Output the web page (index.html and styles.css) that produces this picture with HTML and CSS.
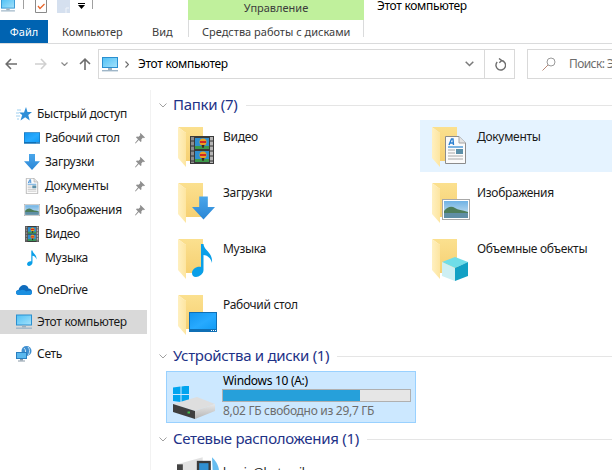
FILE: index.html
```html
<!DOCTYPE html>
<html lang="ru">
<head>
    <meta charset="UTF-8">
    <title>Этот компьютер</title>
    <link rel="stylesheet" href="styles.css">
</head>
<body>
    <!-- icon sprite -->
    <svg class="sprite" xmlns="http://www.w3.org/2000/svg">
        <defs>
            <linearGradient id="gBack" x1="0" y1="0" x2="0" y2="1"><stop offset="0" stop-color="#fbe08f"/><stop offset="1" stop-color="#f6d072"/></linearGradient>
            <linearGradient id="gFlap" x1="0" y1="0" x2="1" y2="0"><stop offset="0" stop-color="#fff0c0"/><stop offset="1" stop-color="#fde5a0"/></linearGradient>
            <linearGradient id="gBlue" x1="0" y1="0" x2="0" y2="1"><stop offset="0" stop-color="#4aa6ea"/><stop offset="1" stop-color="#2a86d6"/></linearGradient>
            <linearGradient id="gScreen" x1="0" y1="0" x2="1" y2="1"><stop offset="0" stop-color="#1496f0"/><stop offset="0.55" stop-color="#27aaff"/><stop offset="1" stop-color="#129cf5"/></linearGradient>
            <linearGradient id="gMon" x1="0" y1="0" x2="1" y2="1"><stop offset="0" stop-color="#4fc0f5"/><stop offset="1" stop-color="#a5e2fb"/></linearGradient>
            <linearGradient id="gSky" x1="0" y1="0" x2="0" y2="1"><stop offset="0" stop-color="#6fb2e4"/><stop offset="1" stop-color="#d5e8f2"/></linearGradient>
            <linearGradient id="gDrive" x1="0" y1="0" x2="0" y2="1"><stop offset="0" stop-color="#e8e8e8"/><stop offset="1" stop-color="#b5b5b5"/></linearGradient>
        </defs>
        <symbol id="folder" viewBox="0 0 42 48">
            <path d="M2 2H27V36H10V8Z" fill="url(#gBack)"/>
            <path d="M2 2L10 8V42L2 33Z" fill="url(#gFlap)"/>
        </symbol>
        <symbol id="film" viewBox="0 0 24 28">
            <rect width="24" height="28" fill="#3a3a3a"/>
            <rect x="1" y="1" width="3" height="26" fill="#8d8d8d"/>
            <rect x="20" y="1" width="3" height="26" fill="#b5b5b5"/>
            <path d="M1 5h3M1 10h3M1 15h3M1 20h3M1 25h3M20 5h3M20 10h3M20 15h3M20 20h3M20 25h3" stroke="#333" stroke-width="1"/>
            <rect x="5" y="2" width="14" height="11" fill="#2f8fd0"/>
            <rect x="5" y="15" width="14" height="11" fill="#2f8fd0"/>
            <rect x="5" y="10" width="14" height="3" fill="#3c9a4a"/>
            <rect x="5" y="23" width="14" height="3" fill="#3c9a4a"/>
            <circle cx="13" cy="6" r="3.5" fill="#e8a020"/>
            <path d="M10 5h6v2h-6z" fill="#d02828"/>
            <path d="M11.5 9h3l-1 3h-1z" fill="#402020"/>
            <circle cx="13" cy="19" r="3.5" fill="#e8a020"/>
            <path d="M10 18h6v2h-6z" fill="#d02828"/>
            <path d="M11.5 22h3l-1 3h-1z" fill="#402020"/>
        </symbol>
        <symbol id="down" viewBox="0 0 24 24">
            <path d="M7.5 0H16.5V11H24L12 24L0 11H7.5Z" fill="url(#gBlue)"/>
        </symbol>
        <symbol id="doc" viewBox="0 0 21 28">
            <path d="M.5.5H14L20.5 7V27.5H.5Z" fill="#fbfbfb" stroke="#8c8c8c"/>
            <path d="M14 .5V7H20.5" fill="#e4e4e4" stroke="#a5a5a5"/>
            <path d="M4 9L6.5 3H8L8.5 9M5 7H8" fill="none" stroke="#2a7fd0" stroke-width="1.4"/>
            <path d="M3 11H18" stroke="#2a86d0" stroke-width="1.2"/>
            <path d="M3 14H10M3 17H10M3 20H18M3 23H18" stroke="#a8a8a8"/>
            <rect x="11" y="13" width="7" height="5" fill="#5b8fa8"/>
        </symbol>
        <symbol id="photo" viewBox="0 0 28 21">
            <rect x=".5" y=".5" width="27" height="20" fill="#fff" stroke="#a8a8a8"/>
            <rect x="2" y="2" width="24" height="17" fill="url(#gSky)"/>
            <path d="M2 12C6 7 10 7 13 9S20 11 26 13V15H2Z" fill="#4d7d5a"/>
            <rect x="2" y="14" width="24" height="5" fill="#5f8ea5"/>
        </symbol>
        <symbol id="note" viewBox="0 0 21 34">
            <path d="M9 1H11.5C12 8 21 9 20 20C19 15 15 12 11.5 12V27C11.5 31 7 34 4 34C1 34 0 32 0 30C0 26 5 23 9 24Z" fill="#0a9fe8"/>
        </symbol>
        <symbol id="screen" viewBox="0 0 28 20">
            <rect width="28" height="20" fill="#0f6fb5"/>
            <rect x="1" y="1" width="26" height="16" fill="url(#gScreen)"/>
            <path d="M22 18.5h1M24 18.5h1M26 18.5h1" stroke="#fff"/>
        </symbol>
        <symbol id="cube" viewBox="0 0 26 24">
            <path d="M13 0L26 5L13 11L0 5Z" fill="#6fdde8"/>
            <path d="M0 5L13 11V24L0 19Z" fill="#cdeff3"/>
            <path d="M26 5L13 11V24L26 19Z" fill="#12a0c4"/>
        </symbol>
        <symbol id="pc" viewBox="0 0 16 15">
            <rect x=".5" y=".5" width="15" height="10" fill="url(#gMon)" stroke="#2a8fd0"/>
            <rect x="6" y="11" width="4" height="2" fill="#9fb0bd"/>
            <rect y="13" width="16" height="1.4" fill="#9fb6c8"/>
        </symbol>
        <symbol id="star" viewBox="0 0 16 16">
            <path d="M10 1L11.5 6H16L12.3 9L13.7 14.5L9.2 11.3L4.5 14.5L6.2 9L3 6.5H8Z" fill="#2f8fd8"/>
            <path d="M1 4H5M0 7H3M0 10H4M1 13H3" stroke="#9fd0f0"/>
        </symbol>
        <symbol id="cloud" viewBox="0 0 16 10">
            <path d="M3 10C1 10 0 9 0 7.5C0 6 1 5 2.5 5C3 2 5.5 0 8 0C10.5 0 12 1.5 12.5 3.5C14.5 3.5 16 5 16 7C16 9 15 10 13 10Z" fill="#0f6cbd"/>
            <path d="M3 10C1 10 0 9 0 7.5C0 6 2 5 4 5.5C7 4 9 5.5 10 6.5C12 5.5 16 5.5 16 7C16 9 15 10 13 10Z" fill="#1b8fe0"/>
        </symbol>
        <symbol id="net" viewBox="0 0 16 16">
            <circle cx="10.5" cy="5" r="5" fill="#3f8fd0"/>
            <path d="M8 2C10 4 10 6 8.5 8M12 1C14 3 14 6 12.5 9" stroke="#c8e4f6" fill="none"/>
            <rect x=".5" y="6.5" width="10" height="6" fill="#5ab8ee" stroke="#2a7fc0"/>
            <rect x="4" y="13" width="3" height="1.5" fill="#8a9aa8"/>
            <rect x="2" y="14.5" width="7" height="1" fill="#8a9aa8"/>
        </symbol>
        <symbol id="pin" viewBox="0 0 10 11">
            <path d="M5.5 0L10 4.5L8.8 5.2L8 4.6L6.3 6.4L6.5 8.2L5.6 9L3.8 7L.6 10.6L0 10L3 6.2L1 4.4L1.8 3.6L3.6 3.7L5.4 2L4.8 1.1Z" fill="#8f8f8f"/>
        </symbol>
        <symbol id="drive" viewBox="0 0 42 33">
            <path d="M0 1.500L7.500 .5V8H0ZM8.500 .4L16 -.5V8H8.500ZM0 9H7.500V16L0 15ZM8.500 9H16V17L8.500 16.100Z" fill="#00a4ef"/>
            <path d="M0 18L24 11L42 18L22 25Z" fill="#dedede"/>
            <path d="M0 18L22 25V33L0 26Z" fill="#3f3f3f"/>
            <path d="M22 25L42 18V25L22 33Z" fill="url(#gDrive)"/>
            <rect x="14.500" y="25.500" width="2.500" height="2" fill="#3fc04a"/>
        </symbol>
        <symbol id="media" viewBox="0 0 36 20">
            <path d="M0 6L22 0V20H0Z" fill="#e2e2e2"/>
            <path d="M0 6H5V20H0Z" fill="#444"/>
            <rect x="17" y="3" width="12" height="14" fill="#3a3a3a"/>
            <rect x="19" y="5" width="8" height="9" fill="#2f8fd0"/>
            <path d="M30 0C33 3 36 7 36 12V20H31Z" fill="#66bdf0"/>
        </symbol>
    </svg>

    <div class="topbar">
        <div class="qat">
            <svg class="qat-pc"><use href="#pc"/></svg>
            <span class="qat-sep"></span>
            <svg class="qat-check" viewBox="0 0 12 13"><path d="M.5 0V12.500H11.500V0" fill="#fff" stroke="#8a8a8a"/><path d="M3 6L5 8.500L9.500 4" fill="none" stroke="#e8652a" stroke-width="1.300"/></svg>
            <svg class="qat-page" viewBox="0 0 13 13"><path d="M0 0H13V13H0Z" fill="#d5e0ef"/><path d="M12 8H9V13" fill="none" stroke="#f0f4fa"/></svg>
            <svg class="qat-drop" viewBox="0 0 7 6"><path d="M0 .5H7" stroke="#000"/><path d="M0 2H7L3.500 6Z" fill="#000"/></svg>
            <span class="qat-sep"></span>
        </div>
        <div class="context-tab">Управление</div>
        <div class="window-title">Этот компьютер</div>
    </div>

    <div class="tabs">
        <div class="tab tab-file">Файл</div>
        <div class="tab tab-comp">Компьютер</div>
        <div class="tab tab-view">Вид</div>
        <div class="tab tab-disk">Средства работы с дисками</div>
    </div>

    <div class="addressbar">
        <div class="nav-buttons">
            <svg class="arrow" viewBox="0 0 12 12"><path d="M6 1L1.200 6L6 11M1.500 6H12" fill="none" stroke="#6d6d6d" stroke-width="1.600"/></svg>
            <svg class="arrow arrow-off" viewBox="0 0 12 12"><path d="M6 1L10.800 6L6 11M10.500 6H0" fill="none" stroke="#d0d0d0" stroke-width="1.600"/></svg>
            <svg class="chev" viewBox="0 0 7 4"><path d="M.5 .5L3.500 3.500L6.500 .5" fill="none" stroke="#8a8a8a" stroke-width="1.200"/></svg>
            <svg class="arrow arrow-up" viewBox="0 0 12 12"><path d="M1 6L6 1.200L11 6M6 1.500V12" fill="none" stroke="#6d6d6d" stroke-width="1.600"/></svg>
        </div>
        <div class="address">
            <svg class="addr-pc"><use href="#pc"/></svg>
            <svg class="addr-sep" viewBox="0 0 4 7"><path d="M.5 .5L3.500 3.500L.5 6.500" fill="none" stroke="#6d6d6d" stroke-width="1.200"/></svg>
            <span class="addr-text">Этот компьютер</span>
            <svg class="addr-drop" viewBox="0 0 9 6"><path d="M.7 .7L4.500 4.500L8.300 .7" fill="none" stroke="#7a7a7a" stroke-width="1.500"/></svg>
            <div class="addr-refresh">
                <svg viewBox="0 0 12 13"><path d="M7.500 2.500A4.800 4.800 0 1 1 3.200 4M5 .5L7.800 2.600L5.300 4.800" fill="none" stroke="#6d6d6d" stroke-width="1.400"/></svg>
            </div>
        </div>
        <div class="search">
            <svg viewBox="0 0 14 14"><circle cx="9" cy="5" r="4" fill="none" stroke="#9a9a9a"/><path d="M6 8L.5 13.500" stroke="#b98a78"/></svg>
            <span>Поиск: Этот компьютер</span>
        </div>
    </div>

    <div class="content">
        <nav class="sidebar">
            <div class="nav-group">
                <div class="nav-item top"><svg class="ico"><use href="#star"/></svg>Быстрый доступ</div>
                <div class="nav-item sub"><svg class="ico"><use href="#screen"/></svg><span class="nav-label">Рабочий стол</span><svg class="pin"><use href="#pin"/></svg></div>
                <div class="nav-item sub"><svg class="ico"><use href="#down"/></svg><span class="nav-label">Загрузки</span><svg class="pin"><use href="#pin"/></svg></div>
                <div class="nav-item sub"><svg class="ico"><use href="#doc"/></svg><span class="nav-label">Документы</span><svg class="pin"><use href="#pin"/></svg></div>
                <div class="nav-item sub"><svg class="ico"><use href="#photo"/></svg><span class="nav-label">Изображения</span><svg class="pin"><use href="#pin"/></svg></div>
                <div class="nav-item sub"><svg class="ico"><use href="#film"/></svg><span class="nav-label">Видео</span></div>
                <div class="nav-item sub"><svg class="ico"><use href="#note"/></svg><span class="nav-label">Музыка</span></div>
            </div>
            <div class="nav-group">
                <div class="nav-item top"><svg class="ico"><use href="#cloud"/></svg>OneDrive</div>
            </div>
            <div class="nav-group">
                <div class="nav-item top selected"><svg class="ico"><use href="#pc"/></svg>Этот компьютер</div>
            </div>
            <div class="nav-group">
                <div class="nav-item top"><svg class="ico"><use href="#net"/></svg>Сеть</div>
            </div>
        </nav>

        <main class="main">
            <div class="group-head">
                <svg class="group-chev" viewBox="0 0 8 5"><path d="M.5 .5L4 4L7.500 .5" fill="none" stroke="#a0a0a0"/></svg>
                <span>Папки (7)</span><i class="group-line"></i>
            </div>
            <div class="folders">
                <div class="tile">
                    <svg class="tile-ico" viewBox="0 0 42 48"><use href="#folder"/><use href="#film" x="14" y="11" width="24" height="28"/></svg>
                    <span class="tile-name">Видео</span>
                </div>
                <div class="tile hovered">
                    <svg class="tile-ico" viewBox="0 0 42 48"><use href="#folder"/><use href="#doc" x="15" y="11" width="21" height="28"/></svg>
                    <span class="tile-name">Документы</span>
                </div>
                <div class="tile">
                    <svg class="tile-ico" viewBox="0 0 42 48"><use href="#folder"/><use href="#down" x="16" y="15" width="23" height="24"/></svg>
                    <span class="tile-name">Загрузки</span>
                </div>
                <div class="tile">
                    <svg class="tile-ico" viewBox="0 0 42 48"><use href="#folder"/><use href="#photo" x="12" y="18" width="28" height="21"/></svg>
                    <span class="tile-name">Изображения</span>
                </div>
                <div class="tile">
                    <svg class="tile-ico" viewBox="0 0 42 48"><use href="#folder"/><use href="#note" x="16" y="6" width="21" height="34"/></svg>
                    <span class="tile-name">Музыка</span>
                </div>
                <div class="tile">
                    <svg class="tile-ico" viewBox="0 0 42 48"><use href="#folder"/><use href="#cube" x="12" y="20" width="26" height="24"/></svg>
                    <span class="tile-name">Объемные объекты</span>
                </div>
                <div class="tile">
                    <svg class="tile-ico" viewBox="0 0 42 48"><use href="#folder"/><use href="#screen" x="13" y="19" width="28" height="20"/></svg>
                    <span class="tile-name">Рабочий стол</span>
                </div>
            </div>

            <div class="group-head">
                <svg class="group-chev" viewBox="0 0 8 5"><path d="M.5 .5L4 4L7.500 .5" fill="none" stroke="#a0a0a0"/></svg>
                <span>Устройства и диски (1)</span><i class="group-line"></i>
            </div>
            <div class="disk">
                <svg class="disk-ico"><use href="#drive"/></svg>
                <div class="disk-info">
                    <div class="disk-name">Windows 10 (A:)</div>
                    <div class="disk-bar"><div class="disk-used" style="width: 73%"></div></div>
                    <div class="disk-free">8,02 ГБ свободно из 29,7 ГБ</div>
                </div>
            </div>

            <div class="group-head">
                <svg class="group-chev" viewBox="0 0 8 5"><path d="M.5 .5L4 4L7.500 .5" fill="none" stroke="#a0a0a0"/></svg>
                <span>Сетевые расположения (1)</span><i class="group-line"></i>
            </div>
            <div class="tile media-tile">
                <svg class="media-ico"><use href="#media"/></svg>
                <span class="tile-name">lumia@hotmail</span>
            </div>
        </main>
    </div>
</body>
</html>
```

FILE: styles.css
```css
* {
    box-sizing: border-box;
}

html, body {
    margin: 0;
    padding: 0;
    width: 612px;
    height: 470px;
    overflow: hidden;
}

body {
    background: #fff;
    font-family: "Noto Sans", sans-serif;
    font-size: 12px;
    line-height: 16px;
    letter-spacing: -0.3px;
    color: #000;
}

svg {
    display: block;
    flex: none;
}

.sprite {
    width: 0;
    height: 0;
}

/* title row */
.topbar {
    display: flex;
    height: 20px;
}

.qat {
    display: flex;
    width: 188px;
}

.qat-pc {
    width: 16px;
    height: 13px;
    margin-top: -1px;
}

.qat-sep {
    width: 1px;
    height: 9px;
    margin-left: 7px;
    background: #a0a0a0;
}

.qat-check {
    width: 12px;
    height: 13px;
    margin-left: 11px;
}

.qat-page {
    width: 13px;
    height: 13px;
    margin-left: 10px;
}

.qat-drop {
    width: 7px;
    height: 6px;
    margin: 3px 0 0 8px;
}

.context-tab {
    width: 176px;
    background: #c0f09c;
    text-align: center;
    color: #3c3c3c;
    font-size: 11px;
    letter-spacing: 0;
}

.window-title {
    margin-left: 13px;
    line-height: 11px;
}

/* ribbon tabs */
.tabs {
    display: flex;
    height: 24px;
    border-bottom: 1px solid #dadbdc;
    color: #3c3c3c;
    font-size: 11px;
    letter-spacing: 0;
}

.tab {
    padding-top: 4px;
    white-space: nowrap;
}

.tab-file {
    width: 48px;
    background: #0063b1;
    color: #fff;
    text-align: center;
}

.tab-comp {
    width: 90px;
    padding-left: 14px;
}

.tab-view {
    width: 50px;
    padding-left: 14px;
}

.tab-disk {
    width: 176px;
    height: 17px;
    padding: 4px 0 0 13px;
    border-left: 1px solid #dadbdc;
    border-right: 1px solid #dadbdc;
}

/* address row */
.addressbar {
    display: flex;
    height: 46px;
    padding-top: 5px;
}

.nav-buttons {
    display: flex;
    flex: none;
    align-items: center;
    width: 98px;
    height: 30px;
    padding-left: 5px;
}

.arrow {
    width: 12px;
    height: 12px;
}

.arrow-off {
    margin-left: 18px;
}

.chev {
    width: 7px;
    height: 4px;
    margin-left: 14px;
}

.arrow-up {
    margin-left: 11px;
}

.address {
    display: flex;
    flex: none;
    align-items: center;
    width: 417px;
    height: 30px;
    border: 1px solid #d9d9d9;
}

.addr-pc {
    width: 16px;
    height: 15px;
    margin-left: 3px;
}

.addr-sep {
    width: 4px;
    height: 7px;
    margin-left: 7px;
}

.addr-text {
    margin-left: 9px;
    flex: 1;
}

.addr-drop {
    width: 9px;
    height: 6px;
    margin-right: 10px;
}

.addr-refresh {
    display: flex;
    align-items: center;
    justify-content: center;
    width: 30px;
    height: 28px;
    border-left: 1px solid #d9d9d9;
}

.addr-refresh svg {
    width: 12px;
    height: 13px;
}

/* window is narrower than the search box, the text runs out of it */
.search {
    display: flex;
    flex: none;
    align-items: center;
    gap: 13px;
    width: 85px;
    height: 30px;
    margin-left: 12px;
    padding-left: 14px;
    border: 1px solid #d9d9d9;
    border-right: none;
    color: #6d6d6d;
    letter-spacing: -0.6px;
    white-space: nowrap;
    overflow: hidden;
}

.search svg {
    width: 14px;
    height: 14px;
}

/* body: nav pane + files */
.content {
    display: flex;
    height: 380px;
    overflow: hidden;
}

.sidebar {
    flex: none;
    width: 151px;
    padding: 12px 3px 0 0;
    border-right: 1px solid #f2f2f2;
}

.nav-group {
    margin-bottom: 8px;
}

.nav-item {
    display: flex;
    align-items: center;
    height: 24px;
    color: #1a1a1a;
    white-space: nowrap;
}

.nav-item.top {
    padding-left: 16px;
}

.nav-item.sub {
    padding-left: 24px;
}

.nav-item .ico {
    width: 16px;
    height: 16px;
    margin-right: 5px;
}

.nav-item.selected {
    background: #d9d9d9;
}

.nav-label {
    flex: 1;
}

.pin {
    width: 10px;
    height: 11px;
    margin-right: 2px;
}

.main {
    flex: 1;
    height: 380px;
    padding: 5px 0 0 8px;
    min-width: 0;
    overflow: hidden;
}

.group-head {
    display: flex;
    align-items: center;
    height: 20px;
    margin-bottom: 5px;
    font-size: 15px;
    color: #1e3287;
    white-space: nowrap;
}

.group-head span {
    margin-top: -2px;
}

.folders + .group-head {
    margin-top: 6px;
}

.disk + .group-head {
    margin-top: 6px;
}

.group-chev {
    width: 8px;
    height: 5px;
    margin-right: 6px;
}

.group-line {
    flex: 1;
    height: 1px;
    margin-left: 8px;
    background: #e5e5e5;
}

.folders {
    display: grid;
    grid-template-columns: 254px 192px;
    grid-auto-rows: 52px;
    row-gap: 4px;
    margin-left: 7px;
}

.tile {
    display: flex;
    height: 52px;
    padding: 5px 0 0 10px;
}

.tile.hovered {
    background: #e5f3ff;
}

.tile-ico {
    width: 42px;
    height: 48px;
    margin-right: 5px;
}

.tile-name {
    margin-top: 4px;
    color: #1a1a1a;
    white-space: nowrap;
}

.disk {
    display: flex;
    gap: 7px;
    width: 250px;
    height: 52px;
    margin-left: 7px;
    padding-left: 6px;
    background: #cce8ff;
    border: 1px solid #99d1ff;
}

.disk-ico {
    width: 42px;
    height: 33px;
    margin-top: 14px;
}

.disk-info {
    flex: 1;
    padding: 1px 4px 0 0;
}

.disk-name {
    padding-left: 1px;
}

.disk-bar {
    height: 13px;
    border: 1px solid #b0b0b0;
    background: #e6e6e6;
}

.disk-used {
    height: 100%;
    background: #26a0da;
}

.disk-free {
    margin-top: 1px;
    padding-left: 1px;
    color: #6d6d6d;
}

.media-tile {
    margin-left: 7px;
    padding: 3px 0 0 11px;
}

.media-ico {
    width: 42px;
    height: 24px;
    margin-right: 4px;
}

.media-tile .tile-name {
    margin-top: 8px;
}
```
